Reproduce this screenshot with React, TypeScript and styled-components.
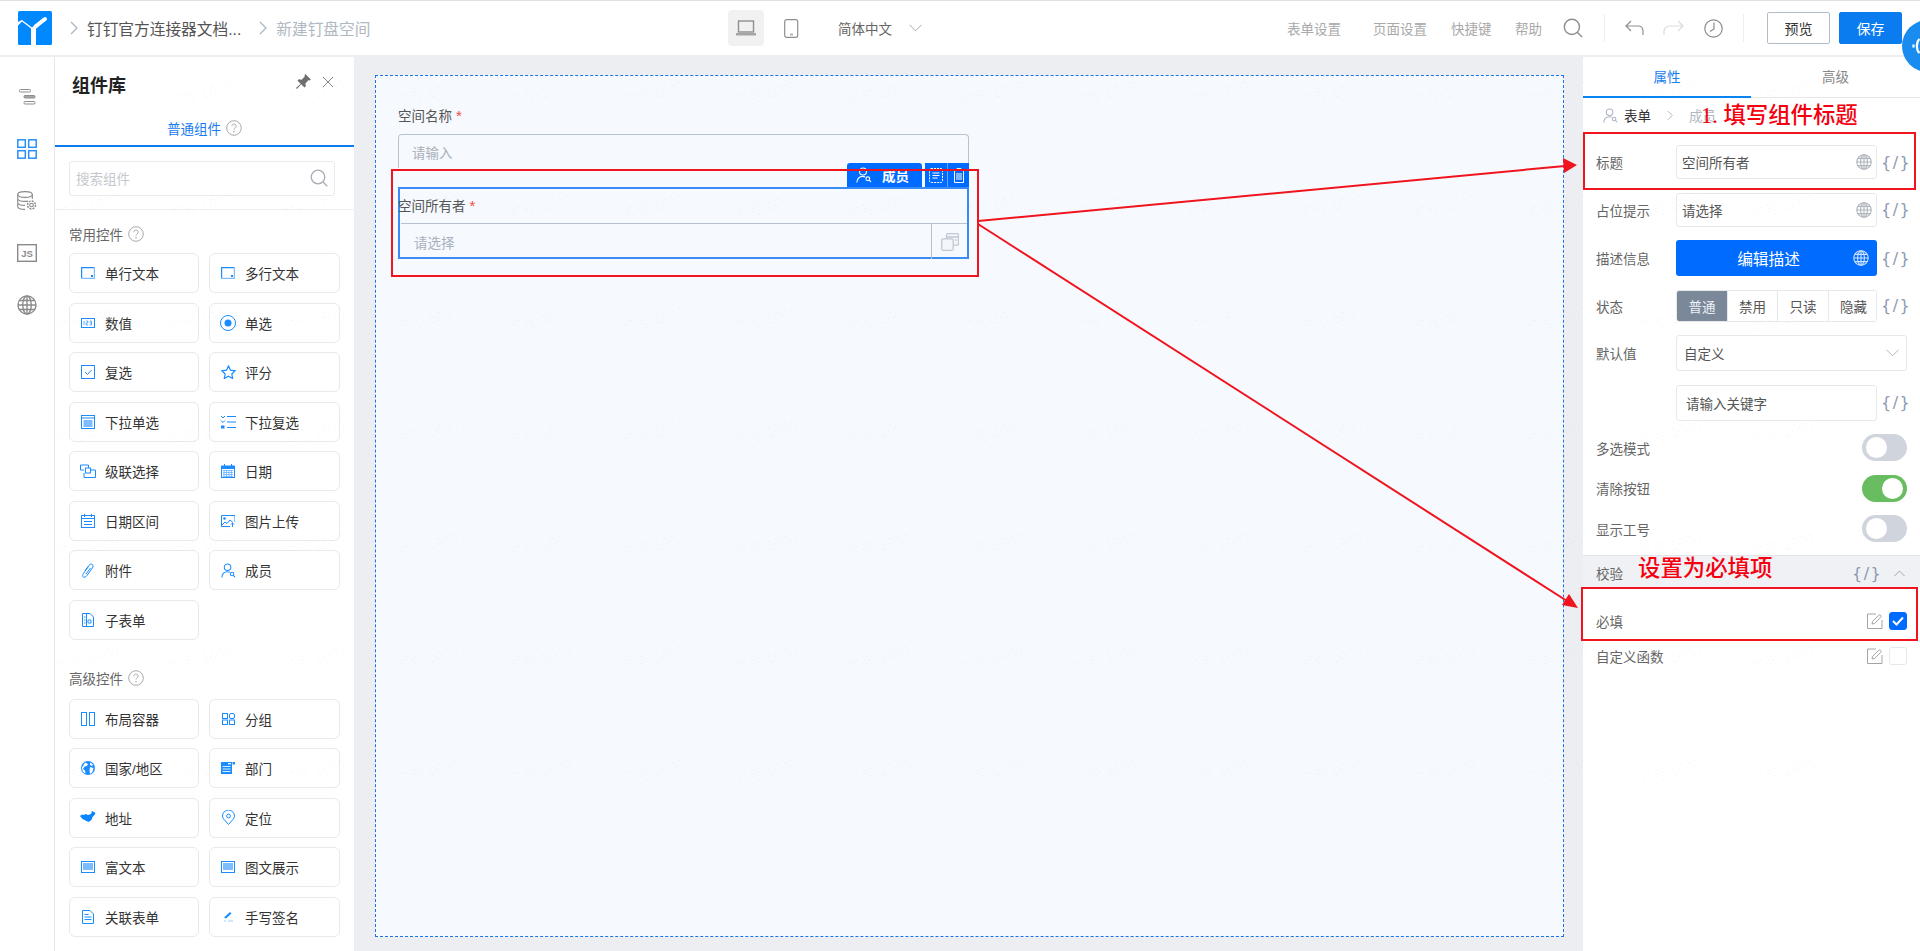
import React from 'react';
import styled, { createGlobalStyle } from 'styled-components';

const GlobalStyle = createGlobalStyle`
  html, body {
    margin: 0;
    padding: 0;
    background: #eceef2;
  }
  * {
    box-sizing: border-box;
  }
`;

const BLUE = '#1a8cff';
const PRIMARY = '#006bff';
const FONT = `"Liberation Sans", "Noto Sans CJK SC", sans-serif`;

/* ---------- icons ---------- */

const Svg = styled.svg`
  display: block;
  flex: none;
`;

const Chevron = ({ c = '#a8b2c0', w = 8, h = 14 }: { c?: string; w?: number; h?: number }) => (
  <Svg width={w} height={h} viewBox="0 0 8 14" fill="none" stroke={c} strokeWidth="1.2">
    <path d="M1 1l6 6-6 6" />
  </Svg>
);

const Logo = () => (
  <Svg width="34" height="34" viewBox="0 0 34 34">
    <rect width="34" height="34" rx="1.5" fill="#0089ff" />
    <path d="M0 14.5l4 -4 9 7v16.500h5v-16.500l8 -7.500q2 -2 -1 -2.500l-11 9 -10 -7.500 -4 2z" fill="#fff" />
    <path d="M17.500 15.500l9.500 -7.500" stroke="#fff" strokeWidth="4" strokeLinecap="round" />
  </Svg>
);

const Globe = ({ c = '#aeb4bc', s = 16 }: { c?: string; s?: number }) => (
  <Svg width={s} height={s} viewBox="0 0 16 16" fill="none" stroke={c} strokeWidth="1.1">
    <circle cx="8" cy="8" r="7.200" />
    <ellipse cx="8" cy="8" rx="3.400" ry="7.200" />
    <path d="M8 .8v14.400M.8 8h14.400M1.800 4.400h12.400M1.800 11.600h12.400" />
  </Svg>
);

const Question = () => (
  <Svg width="16" height="16" viewBox="0 0 16 16" fill="none">
    <circle cx="8" cy="8" r="7.300" stroke="#a9a9a9" strokeWidth="1" />
    <path d="M5.800 6.200c0-1.300 1-2.100 2.200-2.100s2.200.8 2.200 2c0 1.700-2.200 1.700-2.200 3.500" stroke="#a9a9a9" strokeWidth="1" />
    <circle cx="8" cy="11.700" r=".8" fill="#a9a9a9" />
  </Svg>
);

const Search = ({ c = '#a7adb5', s = 18 }: { c?: string; s?: number }) => (
  <Svg width={s} height={s} viewBox="0 0 18 18" fill="none" stroke={c} strokeWidth="1.3">
    <circle cx="8" cy="8" r="6.800" />
    <path d="M13 13l4.200 4.200" />
  </Svg>
);

const UserSearch = ({ c, s = 16 }: { c: string; s?: number }) => (
  <Svg width={s} height={s} viewBox="0 0 16 16" fill="none" stroke={c} strokeWidth="1.1">
    <circle cx="7" cy="4.500" r="3.500" />
    <path d="M.8 15.500c.4-3.800 2.700-6.100 6-6.100 1 0 1.700.2 2.400.5" />
    <circle cx="11.800" cy="11.800" r="1.900" />
    <path d="M13.200 13.200l1.800 1.800" />
  </Svg>
);

const TextFieldIcon = () => (
  <Svg width="14" height="12" viewBox="0 0 14 12" fill="none">
    <path d="M.6 11.400V.6h12.800" stroke={BLUE} strokeWidth="1.200" />
    <path d="M13.400.6v10.800H.6" stroke="#7cbcff" strokeWidth="1.200" />
    <rect x="10" y="8" width="2" height="2" fill={BLUE} />
  </Svg>
);

const componentIcons: Record<string, React.ReactNode> = {
  text: <TextFieldIcon />,
  number: (
    <Svg width="14" height="10" viewBox="0 0 14 10" fill="none">
      <rect x=".5" y=".5" width="13" height="9" stroke={BLUE} />
      <path d="M3 3v4M5.200 3h1.600v2H5.200v2h1.800M8.600 3h1.800v4H8.600M8.800 5h1.600" stroke={BLUE} strokeWidth=".7" />
    </Svg>
  ),
  radio: (
    <Svg width="16" height="16" viewBox="0 0 16 16" fill="none">
      <circle cx="8" cy="8" r="7.500" stroke={BLUE} />
      <circle cx="8" cy="8" r="3.500" fill={BLUE} />
    </Svg>
  ),
  check: (
    <Svg width="14" height="14" viewBox="0 0 14 14" fill="none">
      <rect x=".5" y=".5" width="13" height="13" stroke={BLUE} />
      <path d="M4 7l2.500 2.500L10.500 5" stroke={BLUE} />
    </Svg>
  ),
  star: (
    <Svg width="15" height="14" viewBox="0 0 15 14" fill="none">
      <path d="M7.500 1l2 4.200 4.700.6-3.400 3.200.9 4.500-4.200-2.300-4.200 2.300.9-4.500L.8 5.800l4.700-.6z" stroke={BLUE} strokeWidth="1.200" />
    </Svg>
  ),
  dropdown: (
    <Svg width="14" height="14" viewBox="0 0 14 14" fill="none">
      <rect x=".5" y=".5" width="13" height="13" stroke={BLUE} />
      <path d="M0 3h14" stroke={BLUE} />
      <rect x="2.500" y="5" width="9" height="7" fill="#7cbcff" />
    </Svg>
  ),
  multi: (
    <Svg width="16" height="14" viewBox="0 0 16 14" fill="none">
      <path d="M1 1l2 2 2-2M1 5.500l2 2 2-2" stroke={BLUE} />
      <rect x="1" y="10.500" width="3.500" height="3" fill={BLUE} />
      <path d="M7 1.500h9M7 7h9M7 12.500h9" stroke={BLUE} />
    </Svg>
  ),
  cascade: (
    <Svg width="16" height="14" viewBox="0 0 16 14" fill="none">
      <path d="M4 6H.5V1h8v3" stroke={BLUE} />
      <rect x="5.500" y="4" width="5" height="5" stroke={BLUE} />
      <path d="M11 6h4.500v7.500H4V9" stroke={BLUE} />
    </Svg>
  ),
  date: (
    <Svg width="14" height="14" viewBox="0 0 14 14" fill="none">
      <rect x=".5" y="2" width="13" height="11.500" stroke={BLUE} />
      <rect x="0" y="2" width="14" height="3" fill={BLUE} />
      <path d="M3.500 0v2M10.500 0v2" stroke={BLUE} />
      <path d="M2 6.500h10M2 8.500h10M2 10.500h10M2 12.500h10M3 6v7M5.500 6v7M8 6v7M10.500 6v7" stroke="#5aaaff" strokeWidth=".7" />
    </Svg>
  ),
  range: (
    <Svg width="14" height="14" viewBox="0 0 14 14" fill="none">
      <rect x=".5" y="1.500" width="13" height="12" stroke={BLUE} />
      <path d="M0 4.500h14" stroke={BLUE} />
      <path d="M3 7.500h8M3 10.500h8" stroke={BLUE} />
      <path d="M3.500 0v3M10.500 0v3" stroke={BLUE} />
    </Svg>
  ),
  image: (
    <Svg width="14" height="12" viewBox="0 0 14 12" fill="none">
      <path d="M14 7V.5H.5v11H9" stroke={BLUE} />
      <circle cx="3.500" cy="3.500" r="1.300" fill={BLUE} />
      <path d="M1 10l3-3 2 1.500L9 5l3 2.500" stroke={BLUE} />
      <path d="M11.500 12V8M10 9.500l1.500-1.500L13 9.500" stroke={BLUE} />
    </Svg>
  ),
  attach: (
    <Svg width="12" height="15" viewBox="0 0 12 15" fill="none">
      <path d="M3 7.500L7 2.300c1-1.300 2.500-1.500 3.400-.8.900.7.900 2.200 0 3.500L5 12.500c-1.300 1.700-2.800 2.200-3.700 1.500-.9-.7-.8-2.200.2-3.700L6.500 3.500M4 11l4.500-6" stroke={BLUE} strokeWidth="1" />
    </Svg>
  ),
  user: <UserSearch c={BLUE} s={15} />,
  subform: (
    <Svg width="12" height="14" viewBox="0 0 12 14" fill="none">
      <path d="M.5.5H8l3.500 3.500v9.500H.5z" stroke={BLUE} />
      <path d="M4.500.5v13" stroke={BLUE} />
      <path d="M2 4h1.500M2 7h1.500M2 10h1.500M6 7h3v3H6z" stroke={BLUE} strokeWidth=".9" />
    </Svg>
  ),
  layout: (
    <Svg width="14" height="14" viewBox="0 0 14 14" fill="none">
      <rect x=".5" y=".5" width="5" height="13" stroke={BLUE} />
      <rect x="8.500" y=".5" width="5" height="13" stroke={BLUE} />
    </Svg>
  ),
  group: (
    <Svg width="13" height="12" viewBox="0 0 13 12" fill="none">
      <rect x=".5" y=".5" width="5" height="5" stroke={BLUE} />
      <rect x="7.500" y=".5" width="5" height="5" rx="1.500" stroke={BLUE} />
      <rect x=".5" y="7" width="5" height="4.500" stroke={BLUE} />
      <rect x="7.500" y="7" width="5" height="4.500" stroke={BLUE} />
    </Svg>
  ),
  country: (
    <Svg width="14" height="14" viewBox="0 0 14 14">
      <circle cx="7" cy="7" r="7" fill={BLUE} />
      <path d="M4 1.500l3 1.500-1 2-2.500.5L2 8l2 1.500.5 3L2 11 .8 7zM9 1.500l3 2-1 1.500-2-1zM9 6l3.500 1-1 4-2.500 2-.5-3.500z" fill="#fff" />
    </Svg>
  ),
  dept: (
    <Svg width="14" height="12" viewBox="0 0 14 12">
      <rect width="11" height="12" fill={BLUE} />
      <rect x="11.500" width="2.500" height="2.500" fill={BLUE} />
      <path d="M1.500 4h8v1h-8zM1.500 6.500h8v1h-8zM1.500 9h8v1h-8z" fill="#d8ebff" />
      <rect x="7" y="1" width="3" height="1.300" fill="#fff" />
    </Svg>
  ),
  address: (
    <Svg width="16" height="13" viewBox="0 0 16 13">
      <path d="M0 5l2-1.500 2 .5 1.500-1L8 4l3-1 1-3 2 1 1.500 1-1 2-2 2-1 3-3 2-3-1.500-3-1.500z" fill="#0a84ff" />
    </Svg>
  ),
  location: (
    <Svg width="13" height="15" viewBox="0 0 13 15" fill="none">
      <path d="M6.500 14.500L1.800 9.200C.9 8.200.5 7 .5 6a6 6 0 0 1 12 0c0 1-.4 2.200-1.300 3.200z" stroke={BLUE} />
      <circle cx="6.500" cy="6" r="1.900" stroke={BLUE} />
    </Svg>
  ),
  rich: (
    <Svg width="14" height="12" viewBox="0 0 14 12" fill="none">
      <rect x=".5" y=".5" width="13" height="11" stroke={BLUE} />
      <rect x="2" y="2" width="10" height="7" fill="#7cbcff" />
    </Svg>
  ),
  relation: (
    <Svg width="12" height="14" viewBox="0 0 12 14" fill="none">
      <path d="M.5.500H8L11.500 4v9.500H.5z" stroke={BLUE} />
      <path d="M2.500 4.500h4M2.500 7h7M2.500 9.500h7" stroke={BLUE} />
    </Svg>
  ),
  sign: (
    <Svg width="10" height="11" viewBox="0 0 10 11" fill="none">
      <path d="M1 6.500L7 1l1.500 1.500L3 7.500z" fill={BLUE} />
      <path d="M1 10h2M5 10h5" stroke="#9ccfff" />
    </Svg>
  ),
};

/* ---------- top bar ---------- */

const Page = styled.div`
  position: relative;
  width: 1920px;
  height: 951px;
  overflow: hidden;
  display: flex;
  flex-direction: column;
  background: #eceef2;
  font-family: ${FONT};
  font-size: 13.5px;
  color: #333;
`;

const TopBar = styled.header`
  height: 55px;
  flex: none;
  display: flex;
  align-items: center;
  background: #fff;
  border-top: 1px solid #e0e0e0;
  padding-left: 18px;
  margin-bottom: 2px;
`;

const Crumbs = styled.div`
  display: flex;
  align-items: center;
  width: 710px;
`;

const CrumbSep = styled.span`
  margin: 0 9px 0 18px;
`;

const CrumbText = styled.span<{ $muted?: boolean }>`
  font-size: 15.7px;
  color: ${(p) => (p.$muted ? '#b0b8c2' : '#555')};
  white-space: nowrap;
`;

const DeviceBtn = styled.div<{ $on?: boolean }>`
  width: 36px;
  height: 36px;
  display: flex;
  align-items: center;
  justify-content: center;
  border-radius: 4px;
  background: ${(p) => (p.$on ? '#f1f1f1' : 'transparent')};
`;

const DeviceGroup = styled.div`
  display: flex;
  gap: 9px;
  width: 110px;
`;

const LangPicker = styled.div`
  display: flex;
  align-items: center;
  gap: 17px;
  color: #666;
  width: 449px;
`;

const TopLink = styled.span<{ $w: number }>`
  color: #a9a9a9;
  width: ${(p) => p.$w}px;
  white-space: nowrap;
`;

const TopIcon = styled.span<{ $w: number }>`
  width: ${(p) => p.$w}px;
  display: flex;
`;

const VSep = styled.span<{ $after: number }>`
  width: 1px;
  height: 28px;
  background: #eee;
  margin-right: ${(p) => p.$after}px;
`;

const TopBtn = styled.button<{ $primary?: boolean }>`
  width: 63px;
  height: 32px;
  padding: 0;
  margin-right: 9px;
  font: inherit;
  font-size: 14px;
  border-radius: 2px;
  border: 1px solid ${(p) => (p.$primary ? '#0a7cf0' : '#b5bdc9')};
  background: ${(p) => (p.$primary ? '#0a7cf0' : '#fff')};
  color: ${(p) => (p.$primary ? '#fff' : '#333')};
`;

/* ---------- body ---------- */

const Body = styled.div`
  flex: 1;
  min-height: 0;
  display: flex;
`;

const Rail = styled.nav`
  width: 55px;
  flex: none;
  background: #fff;
  border-right: 1px solid #e8e8e8;
  display: flex;
  flex-direction: column;
  align-items: center;
  padding-top: 30px;
  gap: 32px;
`;

const RailItem = styled.div`
  height: 20px;
  display: flex;
  align-items: center;
  justify-content: center;
`;

const Library = styled.aside`
  width: 299px;
  flex: none;
  background: #fff;
  overflow: hidden;
`;

const LibraryHead = styled.div`
  height: 54px;
  padding: 0 20px 0 17px;
  display: flex;
  align-items: center;
  justify-content: space-between;
`;

const LibraryTitle = styled.h2`
  margin: 0;
  font-size: 18px;
  font-weight: 700;
  color: #222;
`;

const HeadTools = styled.div`
  display: flex;
  align-items: center;
  gap: 11px;
  margin-top: -5px;
`;

const LibraryTab = styled.div`
  height: 36px;
  border-bottom: 2px solid #0a7cf0;
  display: flex;
  align-items: center;
  justify-content: center;
  gap: 5px;
  color: #1a7cf0;
`;

const SearchRow = styled.div`
  padding: 14px 19px 13px 14px;
  border-bottom: 1px solid #eee;
`;

const SearchBox = styled.div`
  height: 35px;
  border: 1px solid #e8eaec;
  border-radius: 3px;
  padding: 0 6px 2px;
  display: flex;
  align-items: center;
  justify-content: space-between;
  color: #c4c8ce;
`;

const Section = styled.section`
  padding: 0 14px;
`;

const SectionLabel = styled.div<{ $top: number; $bottom: number }>`
  display: flex;
  align-items: center;
  gap: 5px;
  height: 20px;
  margin: ${(p) => p.$top}px 0 ${(p) => p.$bottom}px;
  color: #666;
`;

const CardGrid = styled.div`
  display: grid;
  grid-template-columns: 130px 131px;
  grid-auto-rows: 40px;
  column-gap: 10px;
  row-gap: 9.500px;
`;

const Card = styled.div`
  display: flex;
  align-items: center;
  gap: 9px;
  padding-left: 10px;
  border: 1px solid #e8e9eb;
  border-radius: 6px;
  color: #333;
  background: #fff;
`;

const CardIcon = styled.span`
  width: 16px;
  display: flex;
  justify-content: center;
`;

/* ---------- canvas ---------- */

const Stage = styled.main`
  flex: 1;
  min-width: 0;
  padding: 18px 19px 14px 21px;
`;

const Sheet = styled.div`
  position: relative;
  height: 100%;
  background: #f6faff;
  border: 1px dashed #1a73e8;
  padding: 31px 0 0 22px;
`;

const FieldLabel = styled.div`
  height: 18px;
  line-height: 18px;
  color: #555;
`;

const Star = styled.span`
  color: #f5453c;
  margin-left: 4px;
  font-size: 15px;
`;

const NameInput = styled.div`
  width: 571px;
  height: 34px;
  margin-top: 9px;
  padding-left: 13px;
  display: flex;
  align-items: center;
  border: 1px solid #b8c2cf;
  border-bottom: none;
  border-radius: 4px 4px 0 0;
  color: #a9b0ba;
`;

const Selected = styled.div`
  position: relative;
  width: 571px;
  height: 72px;
  margin-top: 19px;
  border: 2px solid #3a8bf6;
`;

const SelectedLabel = styled(FieldLabel)`
  height: 34px;
  line-height: 34px;
  margin-left: -2px;
`;

const MemberSelect = styled.div`
  height: 36px;
  margin-left: 1px;
  display: flex;
  align-items: center;
  border-top: 1px solid #b8c2cf;
  color: #a9b0ba;
  padding-left: 13px;
  justify-content: space-between;
`;

const AddOn = styled.div`
  width: 36px;
  height: 100%;
  display: flex;
  align-items: center;
  justify-content: center;
  border-left: 1px solid #b8c2cf;
`;

const FloatBar = styled.div`
  position: absolute;
  right: -2px;
  top: -26px;
  height: 24px;
  display: flex;
  gap: 3px;
`;

const FloatTitle = styled.div`
  width: 75px;
  display: flex;
  align-items: center;
  gap: 10px;
  padding-left: 9px;
  background: ${PRIMARY};
  border-radius: 3px 3px 0 0;
  color: #fff;
  font-weight: 700;
  font-size: 13.500px;
`;

const FloatTool = styled.div`
  width: 22px;
  display: flex;
  align-items: center;
  justify-content: center;
  background: ${PRIMARY};
  & + & {
    border-left: 1px solid #6aa5ff;
  }
`;

const FloatTools = styled.div`
  display: flex;
`;

/* ---------- right panel ---------- */

const Inspector = styled.aside`
  width: 337px;
  flex: none;
  background: #fff;
  overflow: hidden;
`;

const Tabs = styled.div`
  display: flex;
  height: 41px;
  padding-bottom: 2px;
  border-bottom: 1px solid #e8e8e8;
`;

const Tab = styled.div<{ $on?: boolean }>`
  flex: ${(p) => (p.$on ? '0 0 168px' : '1')};
  display: flex;
  align-items: center;
  justify-content: center;
  color: ${(p) => (p.$on ? '#1a7cf0' : '#888')};
  position: relative;
  &::after {
    content: '';
    display: ${(p) => (p.$on ? 'block' : 'none')};
    position: absolute;
    left: 0;
    right: 0;
    bottom: -3px;
    height: 2px;
    background: #0a84f0;
  }
`;

const Breadcrumb = styled.div`
  height: 47px;
  padding: 0 0 13px 20px;
  display: flex;
  align-items: center;
  color: #333;
`;

const CrumbGap = styled.span<{ $w: number }>`
  margin-left: ${(p) => p.$w}px;
`;

const CrumbMuted = styled.span`
  color: #b0b8c2;
  margin-left: 16px;
`;

const PropList = styled.div`
  display: flex;
  flex-direction: column;
  gap: 13.500px;
  padding: 0 13px 0 13px;
`;

const PropRow = styled.div<{ $h: number }>`
  height: ${(p) => p.$h}px;
  display: flex;
  align-items: center;
`;

const PropLabel = styled.span`
  width: 80px;
  flex: none;
  color: #666;
`;

const FieldBox = styled.div`
  width: 201px;
  height: 100%;
  flex: none;
  display: flex;
  align-items: center;
  justify-content: space-between;
  padding: 0 4px 0 5px;
  border: 1px solid #e6e8eb;
  border-radius: 3px;
  color: #555;
`;

const KeywordBox = styled(FieldBox)`
  padding-left: 9px;
`;

const WideSelect = styled(FieldBox)`
  width: 231px;
  padding: 0 7px;
`;

const EditBtn = styled.div`
  position: relative;
  width: 201px;
  height: 100%;
  flex: none;
  display: flex;
  align-items: center;
  justify-content: center;
  padding-right: 16px;
  background: ${PRIMARY};
  border-radius: 3px;
  color: #fff;
  font-size: 15.700px;
`;

const EditGlobe = styled.span`
  position: absolute;
  right: 8px;
`;

const Segments = styled.div`
  width: 201px;
  height: 100%;
  flex: none;
  display: grid;
  grid-template-columns: 50px 50px 51px 50px;
  border: 1px solid #e6e8eb;
  border-radius: 3px;
  overflow: hidden;
`;

const Segment = styled.div<{ $on?: boolean }>`
  display: flex;
  align-items: center;
  justify-content: center;
  color: ${(p) => (p.$on ? '#eef1f5' : '#555')};
  background: ${(p) => (p.$on ? '#7a8899' : '#fff')};
  & + & {
    border-left: 1px solid #e6e8eb;
  }
`;

const Code = styled.span`
  margin-left: 4px;
  width: 26px;
  text-align: center;
  font-family: "DejaVu Sans", sans-serif;
  font-size: 16px;
  letter-spacing: 1.500px;
  color: #8c9ab0;
  white-space: nowrap;
`;

const GroupCode = styled(Code)`
  margin-left: 0;
`;

const Toggle = styled.div<{ $on?: boolean }>`
  position: relative;
  width: 45px;
  height: 27px;
  margin-left: auto;
  border-radius: 14px;
  background: ${(p) => (p.$on ? '#67bd60' : '#d0d5dd')};
  &::after {
    content: '';
    position: absolute;
    top: 3px;
    left: ${(p) => (p.$on ? '20px' : '4px')};
    width: 21px;
    height: 21px;
    border-radius: 50%;
    background: #fff;
  }
`;

const GroupHead = styled.div`
  height: 32px;
  margin-top: 13px;
  padding: 3px 15px 0 13px;
  display: flex;
  align-items: center;
  justify-content: space-between;
  background: #eff1f5;
  border-top: 1px solid #e2e4e8;
  color: #666;
`;

const GroupTools = styled.div`
  display: flex;
  align-items: center;
  gap: 16px;
`;

const Rule = styled.div<{ $first?: boolean }>`
  height: 35px;
  margin-top: ${(p) => (p.$first ? '16px' : '0')};
  padding: 0 13px 0 13px;
  display: flex;
  align-items: center;
  color: #666;
`;

const RuleTools = styled.div`
  margin-left: auto;
  display: flex;
  align-items: center;
  gap: 6px;
`;

const CheckBox = styled.div<{ $on?: boolean }>`
  width: 18px;
  height: 18px;
  display: flex;
  align-items: center;
  justify-content: center;
  border-radius: 3px;
  background: ${(p) => (p.$on ? PRIMARY : '#fff')};
  border: 1px solid ${(p) => (p.$on ? PRIMARY : '#e6e8eb')};
`;

/* ---------- overlays ---------- */

const Watermarks = styled.div`
  position: absolute;
  inset: 57px 0 0 0;
  display: grid;
  grid-template-columns: repeat(auto-fill, 113px);
  grid-auto-rows: 113px;
  padding: 34px 0 0 57px;
  pointer-events: none;
  overflow: hidden;
`;

const Watermark = styled.span`
  font-size: 14px;
  height: 18px;
  color: rgba(40, 50, 70, 0.03);
  transform: rotate(-15deg);
  transform-origin: left center;
  white-space: nowrap;
`;

const RedBox = styled.div<{ $x: number; $y: number; $w: number; $h: number }>`
  position: absolute;
  left: ${(p) => p.$x}px;
  top: ${(p) => p.$y}px;
  width: ${(p) => p.$w}px;
  height: ${(p) => p.$h}px;
  border: 2px solid #f0141e;
  pointer-events: none;
`;

const Note = styled.span<{ $x: number; $y: number }>`
  position: absolute;
  left: ${(p) => p.$x}px;
  top: ${(p) => p.$y}px;
  color: #f5000f;
  font-family: "Liberation Serif", "Noto Sans CJK SC", serif;
  font-size: 22.400px;
  line-height: 26px;
  font-weight: 500;
  white-space: nowrap;
`;

const ArrowLayer = styled.svg`
  position: absolute;
  left: 0;
  top: 0;
  pointer-events: none;
`;

const HelpBubble = styled.div`
  position: absolute;
  left: 1902px;
  top: 20px;
  width: 52px;
  height: 52px;
  border-radius: 50%;
  background: #1a8cf0;
  display: flex;
  align-items: center;
  padding-left: 10px;
`;

/* ---------- data ---------- */

const commonItems: [string, string][] = [
  ['单行文本', 'text'],
  ['多行文本', 'text'],
  ['数值', 'number'],
  ['单选', 'radio'],
  ['复选', 'check'],
  ['评分', 'star'],
  ['下拉单选', 'dropdown'],
  ['下拉复选', 'multi'],
  ['级联选择', 'cascade'],
  ['日期', 'date'],
  ['日期区间', 'range'],
  ['图片上传', 'image'],
  ['附件', 'attach'],
  ['成员', 'user'],
  ['子表单', 'subform'],
];

const advancedItems: [string, string][] = [
  ['布局容器', 'layout'],
  ['分组', 'group'],
  ['国家/地区', 'country'],
  ['部门', 'dept'],
  ['地址', 'address'],
  ['定位', 'location'],
  ['富文本', 'rich'],
  ['图文展示', 'rich'],
  ['关联表单', 'relation'],
  ['手写签名', 'sign'],
];

const EditIcon = () => (
  <Svg width="16" height="16" viewBox="0 0 16 16" fill="none" stroke="#a5a5a5" strokeWidth="1">
    <path d="M15 7v8.500H.5V1H9" />
    <path d="M5 11l.6-2.600L11.800 2.200q.9-.8 1.900.2t.1 1.900L7.600 10.500z" />
  </Svg>
);

const CodeTag = () => <Code>{'{/}'}</Code>;

const App = () => (
  <Page>
    <GlobalStyle />
    <TopBar>
      <Crumbs>
        <Logo />
        <CrumbSep>
          <Chevron />
        </CrumbSep>
        <CrumbText>钉钉官方连接器文档...</CrumbText>
        <CrumbSep>
          <Chevron />
        </CrumbSep>
        <CrumbText $muted>新建钉盘空间</CrumbText>
      </Crumbs>
      <DeviceGroup>
        <DeviceBtn $on>
          <Svg width="20" height="16" viewBox="0 0 20 16" fill="none">
            <rect x="2.500" y="1" width="15" height="11" stroke="#8f8f8f" strokeWidth="1.400" />
            <rect y="13" width="20" height="2.500" fill="#a5a5a5" />
          </Svg>
        </DeviceBtn>
        <DeviceBtn>
          <Svg width="15" height="19" viewBox="0 0 15 19" fill="none">
            <rect x=".7" y=".7" width="13" height="17.600" rx="2" stroke="#8f8f8f" strokeWidth="1.200" />
            <rect x="6" y="14.500" width="3" height="2" fill="#b5b5b5" />
          </Svg>
        </DeviceBtn>
      </DeviceGroup>
      <LangPicker>
        简体中文
        <Svg width="13" height="8" viewBox="0 0 13 8" fill="none" stroke="#aaa">
          <path d="M.5.800l6 6 6-6" />
        </Svg>
      </LangPicker>
      <TopLink $w={86}>表单设置</TopLink>
      <TopLink $w={78}>页面设置</TopLink>
      <TopLink $w={64}>快捷键</TopLink>
      <TopLink $w={48}>帮助</TopLink>
      <TopIcon $w={41}>
        <Search c="#8f8f8f" s={20} />
      </TopIcon>
      <VSep $after={20} />
      <TopIcon $w={38}>
        <Svg width="19" height="16" viewBox="0 0 19 16" fill="none" stroke="#8f8f8f" strokeWidth="1.200">
          <path d="M6 1L1 6l5 5M1 6h12c3 0 5 2 5 5v4" />
        </Svg>
      </TopIcon>
      <TopIcon $w={41}>
        <Svg width="21" height="16" viewBox="0 0 21 16" fill="none" stroke="#dcdcdc" strokeWidth="1.200">
          <path d="M15 1l5 5-5 5M20 6H7c-3 0-6 2-6 5v4" />
        </Svg>
      </TopIcon>
      <TopIcon $w={39}>
        <Svg width="19" height="19" viewBox="0 0 19 19" fill="none" stroke="#8a8a8a" strokeWidth="1.200">
          <circle cx="9.500" cy="9.500" r="8.700" />
          <path d="M10 3.500v6.500l-4 2.500" />
        </Svg>
      </TopIcon>
      <VSep $after={23} />
      <TopBtn>预览</TopBtn>
      <TopBtn $primary>保存</TopBtn>
    </TopBar>

    <Body>
      <Rail>
        <RailItem>
          <Svg width="17" height="16" viewBox="0 0 17 16" fill="none" stroke="#8f8f8f" strokeWidth="1">
            <rect x=".5" y=".5" width="11" height="2.500" rx="1" />
            <rect x="5" y="6.500" width="11" height="2.500" rx="1" fill="#a8a8a8" />
            <rect x="5" y="12.500" width="11" height="2.500" rx="1" />
          </Svg>
        </RailItem>
        <RailItem>
          <Svg width="20" height="20" viewBox="0 0 20 20" fill="none" stroke="#2a90fa" strokeWidth="1.500">
            <rect x=".8" y=".8" width="7.500" height="7.500" />
            <rect x="11.700" y=".8" width="7.500" height="7.500" />
            <rect x=".8" y="11.700" width="7.500" height="7.500" />
            <rect x="11.700" y="11.700" width="7.500" height="7.500" />
          </Svg>
        </RailItem>
        <RailItem>
          <Svg width="20" height="20" viewBox="0 0 20 20" fill="none" stroke="#8a8a8a" strokeWidth="1.100">
            <ellipse cx="8" cy="3.500" rx="7.300" ry="2.900" />
            <path d="M.7 3.500v12c0 1.600 3.200 2.900 7.300 2.900M.7 7.500c0 1.600 3.200 2.900 7.300 2.900 1 0 2-.1 3-.3M.7 11.500c0 1.600 3.200 2.900 7.300 2.900M15.300 3.500V8" />
            <circle cx="14.500" cy="14" r="1.800" />
            <circle cx="14.500" cy="14" r="4" strokeDasharray="2 1.100" strokeWidth="1.400" />
          </Svg>
        </RailItem>
        <RailItem>
          <Svg width="20" height="18" viewBox="0 0 20 18" fill="none">
            <rect x=".7" y=".7" width="18.600" height="16.600" stroke="#8a8a8a" strokeWidth="1.400" />
            <text x="10" y="12.800" textAnchor="middle" fontSize="9.500" fontWeight="700" fontFamily="Liberation Sans" fill="#8a8a8a">
              JS
            </text>
          </Svg>
        </RailItem>
        <RailItem>
          <Globe c="#8a8a8a" s={20} />
        </RailItem>
      </Rail>

      <Library>
        <LibraryHead>
          <LibraryTitle>组件库</LibraryTitle>
          <HeadTools>
            <Svg width="15" height="15" viewBox="0 0 16 16" fill="#6f6f6f">
              <path d="M10 0l6 6-1.500 1-1-.5L10 10l.5 3-1.500 1.500-3.500-3.500-4.500 5-1-1 5-4.500L1.500 7 3 5.500l3 .5 3.500-3.500L9 1.500z" />
            </Svg>
            <Svg width="12" height="12" viewBox="0 0 13 13" stroke="#7a7a7a" strokeWidth="1">
              <path d="M1 1l11 11M12 1L1 12" />
            </Svg>
          </HeadTools>
        </LibraryHead>
        <LibraryTab>
          普通组件
          <Question />
        </LibraryTab>
        <SearchRow>
          <SearchBox>
            搜索组件
            <Search c="#a7adb5" s={18} />
          </SearchBox>
        </SearchRow>
        <Section>
          <SectionLabel $top={14} $bottom={9}>
            常用控件
            <Question />
          </SectionLabel>
          <CardGrid>
            {commonItems.map(([name, icon]) => (
              <Card key={name}>
                <CardIcon>{componentIcons[icon]}</CardIcon>
                {name}
              </Card>
            ))}
          </CardGrid>
          <SectionLabel $top={28} $bottom={11}>
            高级控件
            <Question />
          </SectionLabel>
          <CardGrid>
            {advancedItems.map(([name, icon]) => (
              <Card key={name}>
                <CardIcon>{componentIcons[icon]}</CardIcon>
                {name}
              </Card>
            ))}
          </CardGrid>
        </Section>
      </Library>

      <Stage>
        <Sheet>
          <FieldLabel>
            空间名称
            <Star>*</Star>
          </FieldLabel>
          <NameInput>请输入</NameInput>
          <Selected>
            <FloatBar>
              <FloatTitle>
                <UserSearch c="#fff" s={16} />
                成员
              </FloatTitle>
              <FloatTools>
                <FloatTool>
                  <Svg width="14" height="15" viewBox="0 0 14 15" fill="none" stroke="#fff" strokeWidth="1">
                    <rect x=".5" y=".5" width="13" height="14" rx="1.500" strokeDasharray="2 1" />
                    <path d="M3.500 5h7M3.500 7.500h7M3.500 10h5" />
                  </Svg>
                </FloatTool>
                <FloatTool>
                  <Svg width="12" height="15" viewBox="0 0 12 15" fill="none" stroke="#fff" strokeWidth="1">
                    <path d="M0 2.500h12M4 2V.5h4V2M1.500 3v11.500h9V3M4 5v7M6 5v7M8 5v7" />
                  </Svg>
                </FloatTool>
              </FloatTools>
            </FloatBar>
            <SelectedLabel>
              空间所有者
              <Star>*</Star>
            </SelectedLabel>
            <MemberSelect>
              请选择
              <AddOn>
                <Svg width="18" height="18" viewBox="0 0 18 18" fill="#f3f6fb" stroke="#c0c8d4" strokeWidth="1.300">
                  <rect x="5.500" y=".7" width="12" height="11.500" rx="1.500" />
                  <path d="M5.500 4h12M14 7h1.500" />
                  <rect x=".7" y="5.800" width="11.500" height="11.500" rx="1.500" />
                </Svg>
              </AddOn>
            </MemberSelect>
          </Selected>
        </Sheet>
      </Stage>

      <Inspector>
        <Tabs>
          <Tab $on>属性</Tab>
          <Tab>高级</Tab>
        </Tabs>
        <Breadcrumb>
          <UserSearch c="#a9b2c0" s={15} />
          <CrumbGap $w={6}>表单</CrumbGap>
          <CrumbGap $w={16}>
            <Chevron c="#a8b2c0" w={6} h={11} />
          </CrumbGap>
          <CrumbMuted>成员</CrumbMuted>
        </Breadcrumb>
        <PropList>
          <PropRow $h={34}>
            <PropLabel>标题</PropLabel>
            <FieldBox>
              空间所有者
              <Globe />
            </FieldBox>
            <CodeTag />
          </PropRow>
          <PropRow $h={34}>
            <PropLabel>占位提示</PropLabel>
            <FieldBox>
              请选择
              <Globe />
            </FieldBox>
            <CodeTag />
          </PropRow>
          <PropRow $h={36}>
            <PropLabel>描述信息</PropLabel>
            <EditBtn>
              编辑描述
              <EditGlobe>
                <Globe c="#cfe2ff" />
              </EditGlobe>
            </EditBtn>
            <CodeTag />
          </PropRow>
          <PropRow $h={32}>
            <PropLabel>状态</PropLabel>
            <Segments>
              <Segment $on>普通</Segment>
              <Segment>禁用</Segment>
              <Segment>只读</Segment>
              <Segment>隐藏</Segment>
            </Segments>
            <CodeTag />
          </PropRow>
          <PropRow $h={36}>
            <PropLabel>默认值</PropLabel>
            <WideSelect>
              自定义
              <Svg width="13" height="8" viewBox="0 0 13 8" fill="none" stroke="#b0b6be">
                <path d="M.5.800l6 6 6-6" />
              </Svg>
            </WideSelect>
          </PropRow>
          <PropRow $h={36}>
            <PropLabel />
            <KeywordBox>请输入关键字</KeywordBox>
            <CodeTag />
          </PropRow>
          <PropRow $h={27}>
            <PropLabel>多选模式</PropLabel>
            <Toggle />
          </PropRow>
          <PropRow $h={27}>
            <PropLabel>清除按钮</PropLabel>
            <Toggle $on />
          </PropRow>
          <PropRow $h={27}>
            <PropLabel>显示工号</PropLabel>
            <Toggle />
          </PropRow>
        </PropList>
        <GroupHead>
          校验
          <GroupTools>
            <GroupCode>{'{/}'}</GroupCode>
            <Svg width="11" height="7" viewBox="0 0 11 7" fill="none" stroke="#9aa5b5">
              <path d="M.5 6l5-5 5 5" />
            </Svg>
          </GroupTools>
        </GroupHead>
        <Rule $first>
          必填
          <RuleTools>
            <EditIcon />
            <CheckBox $on>
              <Svg width="12" height="10" viewBox="0 0 12 10" fill="none" stroke="#fff" strokeWidth="2">
                <path d="M1 5l3.500 3.500L11 1.500" />
              </Svg>
            </CheckBox>
          </RuleTools>
        </Rule>
        <Rule>
          自定义函数
          <RuleTools>
            <EditIcon />
            <CheckBox />
          </RuleTools>
        </Rule>
      </Inspector>
    </Body>

    <HelpBubble>
      <Svg width="8" height="16" viewBox="0 0 8 16" fill="none" stroke="#fff" strokeWidth="2.200">
        <path d="M7.500 1C4 4 4 12 7.500 15" />
        <path d="M1.500 6.500v3" />
      </Svg>
    </HelpBubble>

    <Watermarks>
      {Array.from({ length: 112 }, (_, i) => (
        <Watermark key={i}>可亏 1600</Watermark>
      ))}
    </Watermarks>

    <RedBox $x={391} $y={169} $w={588} $h={108} />
    <RedBox $x={1583} $y={132} $w={333} $h={58} />
    <RedBox $x={1581} $y={587} $w={337} $h={54} />
    <Note $x={1701} $y={103}>1. 填写组件标题</Note>
    <Note $x={1638} $y={556}>设置为必填项</Note>
    <ArrowLayer width="1920" height="951" viewBox="0 0 1920 951">
      <path d="M978 221L1565 166" stroke="#f0141e" strokeWidth="2" fill="none" />
      <path d="M1577 165l-14-7 1 15z" fill="#f0141e" />
      <path d="M978 224L1567 601" stroke="#f0141e" strokeWidth="2" fill="none" />
      <path d="M1578 608l-9-14-7 11z" fill="#f0141e" />
    </ArrowLayer>
  </Page>
);

export default App;
